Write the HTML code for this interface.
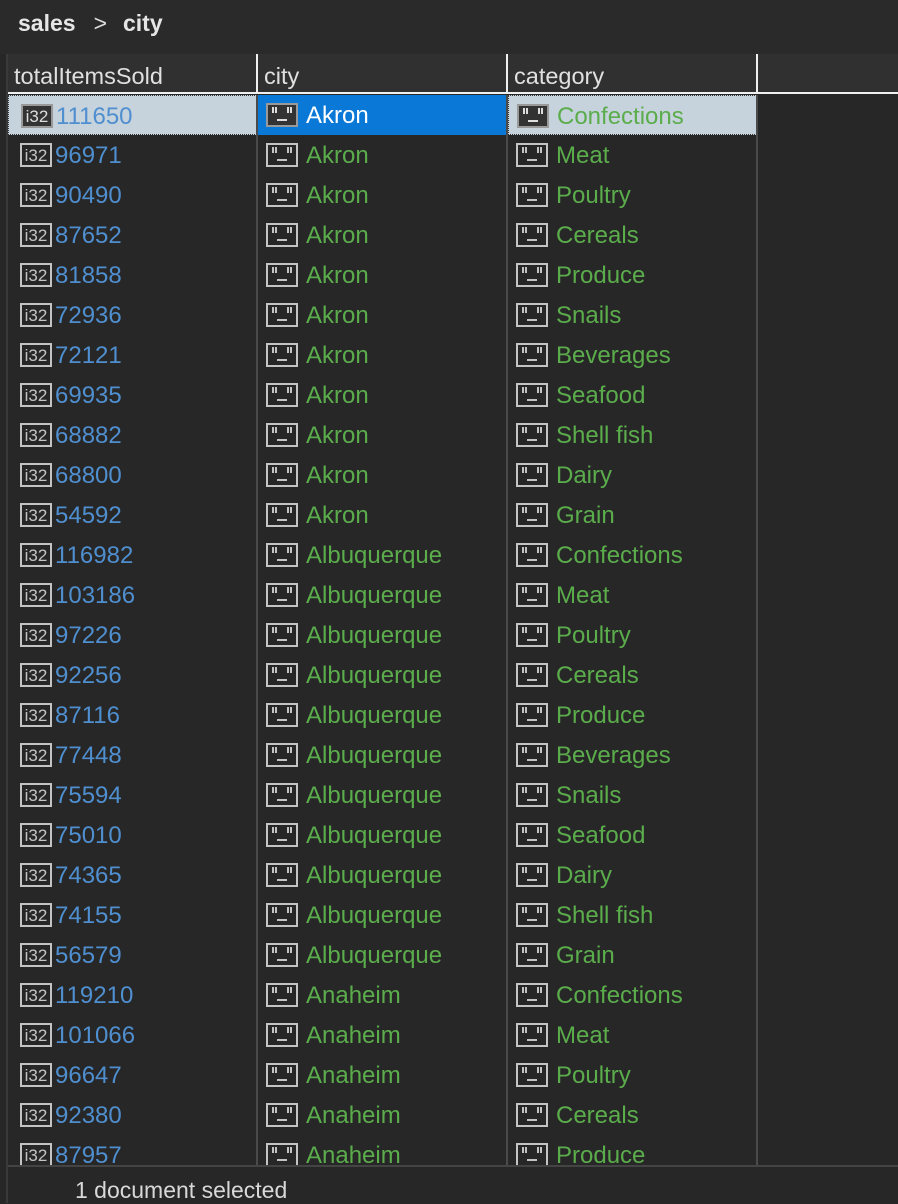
<!DOCTYPE html>
<html><head><meta charset="utf-8"><style>
*{margin:0;padding:0;box-sizing:border-box}
body{width:898px;height:1203px;background:#272727;font-family:"Liberation Sans",sans-serif;overflow:hidden;position:relative}
#top{position:absolute;left:0;top:0;width:898px;height:54px;background:#2a2a2a}
#crumb{position:absolute;left:18px;top:10px;font-size:23px;font-weight:bold;color:#e6e6e6}
#crumb .sep{font-weight:normal;margin:0 16px 0 18px;color:#ddd}
#hdr{position:absolute;left:8px;top:54px;width:890px;height:40px;background:#303030;border-bottom:2px solid #f0f0f0}
.hc{position:absolute;top:9px;font-size:23.5px;color:#e0e0e0}
.vl{position:absolute;width:2px;background:#f0f0f0;top:54px;height:40px}
.bl{position:absolute;width:2px;background:#4a4a4a;top:95px;height:1071px}
#leftl{position:absolute;left:6px;top:54px;width:2px;height:1149px;background:#3a3a3a}
#grid{position:absolute;left:8px;top:95px;width:890px;height:1071px;overflow:hidden}
.r{position:relative;height:40px}
.c{position:absolute;top:0;height:40px;font-size:24px;line-height:42px;white-space:nowrap}
.c svg{position:absolute;top:8px}
.n{left:0;width:249px;color:#4f8fd0}
.n svg{left:12px}.n span{position:absolute;left:47px}
.s{left:250px;width:249px;color:#5bad4c}
.s svg{left:8px}.s span{position:absolute;left:48px}
.k{left:500px;width:249px;color:#5bad4c}
.k svg{left:8px}.k span{position:absolute;left:48px}
.sel1{background:#c6d2dc;border:1px dotted #333}
.sel2{background:#0a78d6;color:#fff}
#botl{position:absolute;left:8px;top:1165px;width:890px;height:2px;background:#444}
#status{position:absolute;left:75px;top:1177px;font-size:23px;color:#d8d8d8}
</style></head><body>
<svg width="0" height="0" style="position:absolute">
<defs>
<symbol id="qi" viewBox="0 0 32 24"><rect x="1" y="1" width="30" height="22" fill="none" stroke="#c4c4c4" stroke-width="2"/><path d="M7 4v6M10 4v6M22 4v6M25 4v6M11 17h10" stroke="#c4c4c4" stroke-width="2"/></symbol>
<symbol id="qif" viewBox="0 0 32 24"><rect x="1" y="1" width="30" height="22" fill="#333" stroke="#999" stroke-width="2"/><path d="M7 4v6M10 4v6M22 4v6M25 4v6M11 17h10" stroke="#ddd" stroke-width="2"/></symbol>
</defs></svg>
<div id="top"><div id="crumb">sales<span class="sep">&gt;</span>city</div></div>
<div id="hdr">
<div class="hc" style="left:6px">totalItemsSold</div>
<div class="hc" style="left:256px">city</div>
<div class="hc" style="left:506px">category</div>
</div>
<div class="vl" style="left:256px"></div><div class="vl" style="left:506px"></div><div class="vl" style="left:756px"></div>
<div id="leftl"></div>
<div id="grid">
<div class="r"><div class="c n sel1"><svg width="32" height="24" viewBox="0 0 32 24"><rect x="1" y="1" width="30" height="22" fill="#333" stroke="#999" stroke-width="2"/><text x="16" y="18" font-family="Liberation Sans" font-size="17" fill="#ddd" text-anchor="middle">i32</text></svg><span>111650</span></div><div class="c s sel2"><svg width="32" height="24"><use href="#qif"/></svg><span>Akron</span></div><div class="c k sel1"><svg width="32" height="24"><use href="#qif"/></svg><span>Confections</span></div></div>
</div>
<div class="bl" style="left:256px"></div><div class="bl" style="left:506px"></div><div class="bl" style="left:756px"></div>
<div id="botl"></div>
<div id="status">1 document selected</div>
<script>
var d=[["96971","Akron","Meat"],["90490","Akron","Poultry"],["87652","Akron","Cereals"],["81858","Akron","Produce"],["72936","Akron","Snails"],["72121","Akron","Beverages"],["69935","Akron","Seafood"],["68882","Akron","Shell fish"],["68800","Akron","Dairy"],["54592","Akron","Grain"],["116982","Albuquerque","Confections"],["103186","Albuquerque","Meat"],["97226","Albuquerque","Poultry"],["92256","Albuquerque","Cereals"],["87116","Albuquerque","Produce"],["77448","Albuquerque","Beverages"],["75594","Albuquerque","Snails"],["75010","Albuquerque","Seafood"],["74365","Albuquerque","Dairy"],["74155","Albuquerque","Shell fish"],["56579","Albuquerque","Grain"],["119210","Anaheim","Confections"],["101066","Anaheim","Meat"],["96647","Anaheim","Poultry"],["92380","Anaheim","Cereals"],["87957","Anaheim","Produce"]];
var ic='<svg width="32" height="24" viewBox="0 0 32 24"><rect x="1" y="1" width="30" height="22" fill="none" stroke="#c4c4c4" stroke-width="2"/><text x="16" y="18" font-family="Liberation Sans" font-size="17" fill="#c4c4c4" text-anchor="middle">i32</text></svg>';
var q='<svg width="32" height="24"><use href="#qi"/></svg>';
var h='';d.forEach(function(r){h+='<div class="r"><div class="c n">'+ic+'<span>'+r[0]+'</span></div><div class="c s">'+q+'<span>'+r[1]+'</span></div><div class="c k">'+q+'<span>'+r[2]+'</span></div></div>';});
document.getElementById('grid').insertAdjacentHTML('beforeend',h);
</script>
</body></html>
